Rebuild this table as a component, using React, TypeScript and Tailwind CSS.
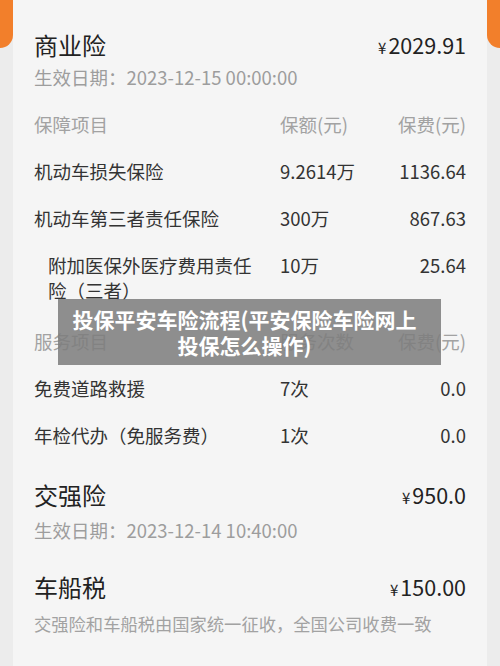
import React from "react";

const font = { fontFamily: '"Noto Sans CJK SC", "Noto Sans", sans-serif' };

const Row = ({
  name,
  amount,
  fee,
  indent,
  muted,
}: {
  name: string;
  amount: string;
  fee: string;
  indent?: boolean;
  muted?: boolean;
}) => (
  <div
    className={`flex items-start py-[11px] text-[18.5px] leading-[25px] ${
      muted ? "text-[#a2a2a2]" : "text-[#333]"
    }`}
  >
    <div className={`w-[246px] shrink-0 ${indent ? "pl-[14px] pr-[20px]" : ""}`}>
      {name}
    </div>
    <div className="flex-1">{amount}</div>
    <div className="text-right">{fee}</div>
  </div>
);

const Heading = ({ title, price }: { title: string; price: string }) => (
  <div className="flex items-center justify-between h-[32px]">
    <span className="text-[24px] text-[#222]">{title}</span>
    <span className="text-[21.5px] text-[#222]">
      <span className="text-[15px] mr-[2px]">¥</span>
      {price}
    </span>
  </div>
);

export default function App() {
  return (
    <div className="relative flex w-full min-h-screen bg-[#ececec]" style={font}>
      {/* orange edges peeking out */}
      <div className="w-[13px] shrink-0">
        <div className="h-[48px] bg-[#f27f2b] rounded-br-[13px]" />
      </div>

      <div className="flex-1 bg-[#f5f5f5] px-[21px] pt-[29px] pb-[40px]">
        <Heading title="商业险" price="2029.91" />
        <p className="mt-[3px] text-[18.5px] leading-[26px] text-[#9d9d9d]">
          生效日期：2023-12-15 00:00:00
        </p>

        <div className="mt-[11px]">
          <Row name="保障项目" amount="保额(元)" fee="保费(元)" muted />
          <Row name="机动车损失保险" amount="9.2614万" fee="1136.64" />
          <Row name="机动车第三者责任保险" amount="300万" fee="867.63" />
          <Row
            name="附加医保外医疗费用责任险（三者）"
            amount="10万"
            fee="25.64"
            indent
          />
          <div className="mt-[4px]">
            <Row name="服务项目" amount="服务次数" fee="保费(元)" muted />
          </div>
          <Row name="免费道路救援" amount="7次" fee="0.0" />
          <Row name="年检代办（免服务费）" amount="1次" fee="0.0" />
        </div>

        <div className="mt-[20px]">
          <Heading title="交强险" price="950.0" />
          <p className="mt-[6px] text-[18.5px] leading-[26px] text-[#9d9d9d]">
            生效日期：2023-12-14 10:40:00
          </p>
        </div>

        <div className="mt-[28px]">
          <Heading title="车船税" price="150.00" />
          <p className="mt-[8px] text-[17.3px] leading-[26px] text-[#a2a2a2]">
            交强险和车船税由国家统一征收，全国公司收费一致
          </p>
        </div>
      </div>

      <div className="w-[13px] shrink-0">
        <div className="h-[48px] bg-[#f27f2b] rounded-bl-[13px]" />
      </div>

      {/* article title banner */}
      <div className="absolute left-[58px] top-[299px] w-[383px] h-[66px] bg-[rgba(125,125,125,0.86)] flex flex-col items-center justify-center pr-[10px]">
        <p className="text-[21px] leading-[26px] font-bold text-white">
          投保平安车险流程(平安保险车险网上
        </p>
        <p className="text-[21px] leading-[26px] font-bold text-white">
          投保怎么操作)
        </p>
      </div>
    </div>
  );
}
